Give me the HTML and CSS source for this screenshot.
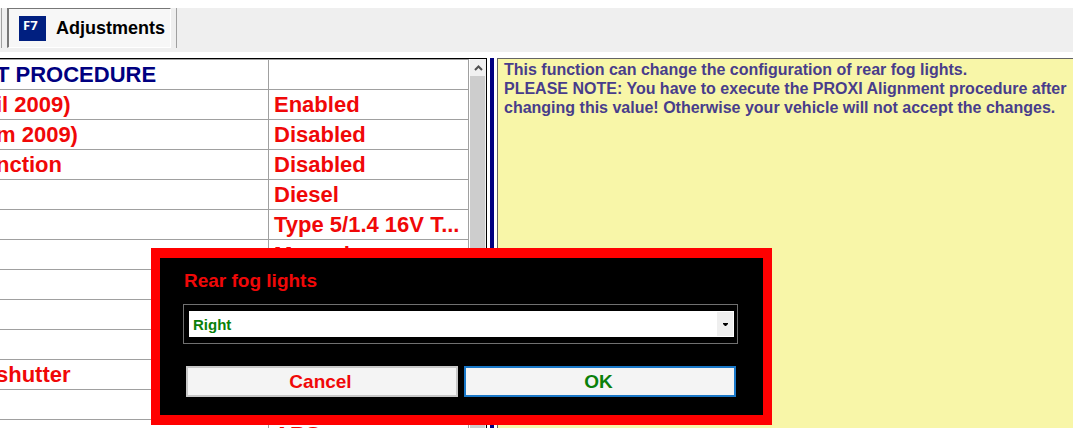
FILE: index.html
```
<!DOCTYPE html>
<html lang="en">
<head>
    <meta charset="UTF-8">
    <meta name="viewport" content="width=device-width, initial-scale=1.0">
    <title>Adjustments</title>
    <link rel="stylesheet" href="styles.css">
</head>
<body>
    <header class="toolbar">
        <button class="tool-btn">
            <span class="key">F7</span>
            Adjustments
        </button>
    </header>

    <main class="content">
        <section class="list">
            <table class="settings">
                <tr class="heading"><td>T PROCEDURE</td><td></td></tr>
                <tr><td>il 2009)</td><td>Enabled</td></tr>
                <tr><td>m 2009)</td><td>Disabled</td></tr>
                <tr><td>nction</td><td>Disabled</td></tr>
                <tr><td></td><td>Diesel</td></tr>
                <tr><td></td><td>Type 5/1.4 16V T...</td></tr>
                <tr><td></td><td>Manual</td></tr>
                <tr><td></td><td></td></tr>
                <tr><td></td><td></td></tr>
                <tr><td></td><td></td></tr>
                <tr><td>shutter</td><td></td></tr>
                <tr><td></td><td></td></tr>
                <tr><td></td><td>ABS</td></tr>
            </table>
            <div class="scrollbar">
                <button class="scroll-up" aria-label="Scroll up">
                    <svg width="9" height="6" viewBox="0 0 9 6"><path d="M1 5 L4.500 1.500 L8 5" fill="none" stroke="#505050" stroke-width="2"/></svg>
                </button>
                <div class="thumb"></div>
            </div>
        </section>
        <div class="splitter"></div>
        <section class="info">
            This function can change the configuration of rear fog lights.<br>
            PLEASE NOTE: You have to execute the PROXI Alignment procedure after<br>
            changing this value! Otherwise your vehicle will not accept the changes.
        </section>
    </main>

    <form class="dialog" role="dialog">
        <label for="fogLights">Rear fog lights</label>
        <div class="frame">
            <div class="select-box">
                <select id="fogLights">
                    <option>Right</option>
                </select>
                <svg class="arrow" width="5" height="3" viewBox="0 0 5 3"><path d="M0 0 H5 V1 L3 3 H2 L0 1 Z"/></svg>
            </div>
        </div>
        <div class="buttons">
            <button type="button" class="cancel">Cancel</button>
            <button type="button" class="ok">OK</button>
        </div>
    </form>
</body>
</html>
```
FILE: styles.css
```
* {
    box-sizing: border-box;
}

body {
    font-family: "Liberation Sans", Arial, sans-serif;
    font-weight: bold;
    background: #fff;
    margin: 0;
    padding-top: 8px;
    height: 100vh;
    display: flex;
    flex-direction: column;
    overflow: hidden;
}

button,
select {
    font: inherit;
    margin: 0;
}

.toolbar {
    background: #efefef;
    flex: none;
    display: flex;
    padding: 0 0 4px 1px;
}

.toolbar::before,
.toolbar::after {
    content: "";
    width: 1px;
    background: #a0a0a0;
}

.tool-btn {
    display: flex;
    align-items: center;
    gap: 10px;
    height: 40px;
    margin: 0 5px;
    padding: 0 5px 0 10px;
    font-size: 18px;
    color: #000;
    background: #f7f7f7;
    border: 1px solid #fff;
    border-top: 1px solid #777;
    border-left: 2px solid #777;
}

.key {
    width: 27px;
    height: 25px;
    padding: 2px 0 0 4px;
    background: #001f80;
    color: #fff;
    font-family: "Open Sans", sans-serif;
    font-size: 13px;
    line-height: 14px;
    text-align: left;
}

.content {
    flex: 1;
    min-height: 0;
    display: flex;
    margin-top: 6px;
}

.list {
    width: 487px;
    flex: none;
    display: flex;
    gap: 1px;
    overflow: hidden;
    border-top: 1px solid #000;
    border-right: 1px solid #000;
}

.settings {
    flex: 1;
    table-layout: fixed;
    border-collapse: separate;
    border-spacing: 0;
    border-top: 1px solid #a0a0a0;
    font-size: 22px;
    color: #f00808;
}

.settings td {
    height: 30px;
    padding: 1px 0 0 5px;
    line-height: 28px;
    white-space: nowrap;
    border-bottom: 1px solid #a0a0a0;
    border-right: 1px solid #a0a0a0;
}

/* the names column is scrolled past the left edge */
.settings td:first-child {
    width: 269px;
    padding-left: 0;
    text-indent: -4px;
}

.settings .heading {
    color: #000080;
}

.scrollbar {
    width: 16px;
    display: flex;
    flex-direction: column;
    background: #f0f0f0;
}

.scroll-up {
    height: 17px;
    padding: 0;
    border: 0;
    background: #f0f0f0;
    display: flex;
    align-items: center;
    justify-content: center;
}

.thumb {
    flex: 1;
    margin-right: 1px;
    background: #cdcdcd;
}

.splitter {
    width: 4px;
    margin: 0 3px;
    flex: none;
    background: #000080;
}

.info {
    flex: 1;
    padding: 1px 6px;
    font-size: 16px;
    line-height: 19px;
    white-space: nowrap;
    color: #483d8b;
    background: #f8f6a8;
    border-top: 1px solid #646464;
    border-left: 1px solid #646464;
}

.dialog {
    position: absolute;
    left: 151px;
    top: 248px;
    width: 621px;
    padding: 12px 25px 18px 23px;
    background: #000;
    border: solid #f00;
    border-width: 10px 9px;
}

.dialog label {
    display: block;
    padding-left: 1px;
    font-size: 19px;
    line-height: 22px;
    color: #f00808;
}

.frame {
    margin: 12px 0 22px;
    padding: 6px 3px 6px 5px;
    border: 1px solid #707070;
}

.select-box {
    position: relative;
}

.select-box select {
    display: block;
    appearance: none;
    width: 100%;
    height: 26px;
    padding: 0 3px;
    border: 1px solid #fff;
    border-radius: 0;
    background: linear-gradient(#efefef, #efefef) right / 16px 100% no-repeat #fff;
    color: #0a800a;
    font-size: 15px;
}

.arrow {
    position: absolute;
    right: 6px;
    top: 12px;
}

.buttons {
    display: flex;
    gap: 6px;
    padding: 0 2px 0 3px;
}

.buttons button {
    flex: 1;
    height: 31px;
    padding: 0 3px 0 0;
    font-size: 19px;
    background: #f4f4f4;
}

.cancel {
    color: #f00808;
    border: 2px solid #c8c8c8;
}

.ok {
    color: #0a800a;
    border: 2px solid #1a78c8;
}
```
